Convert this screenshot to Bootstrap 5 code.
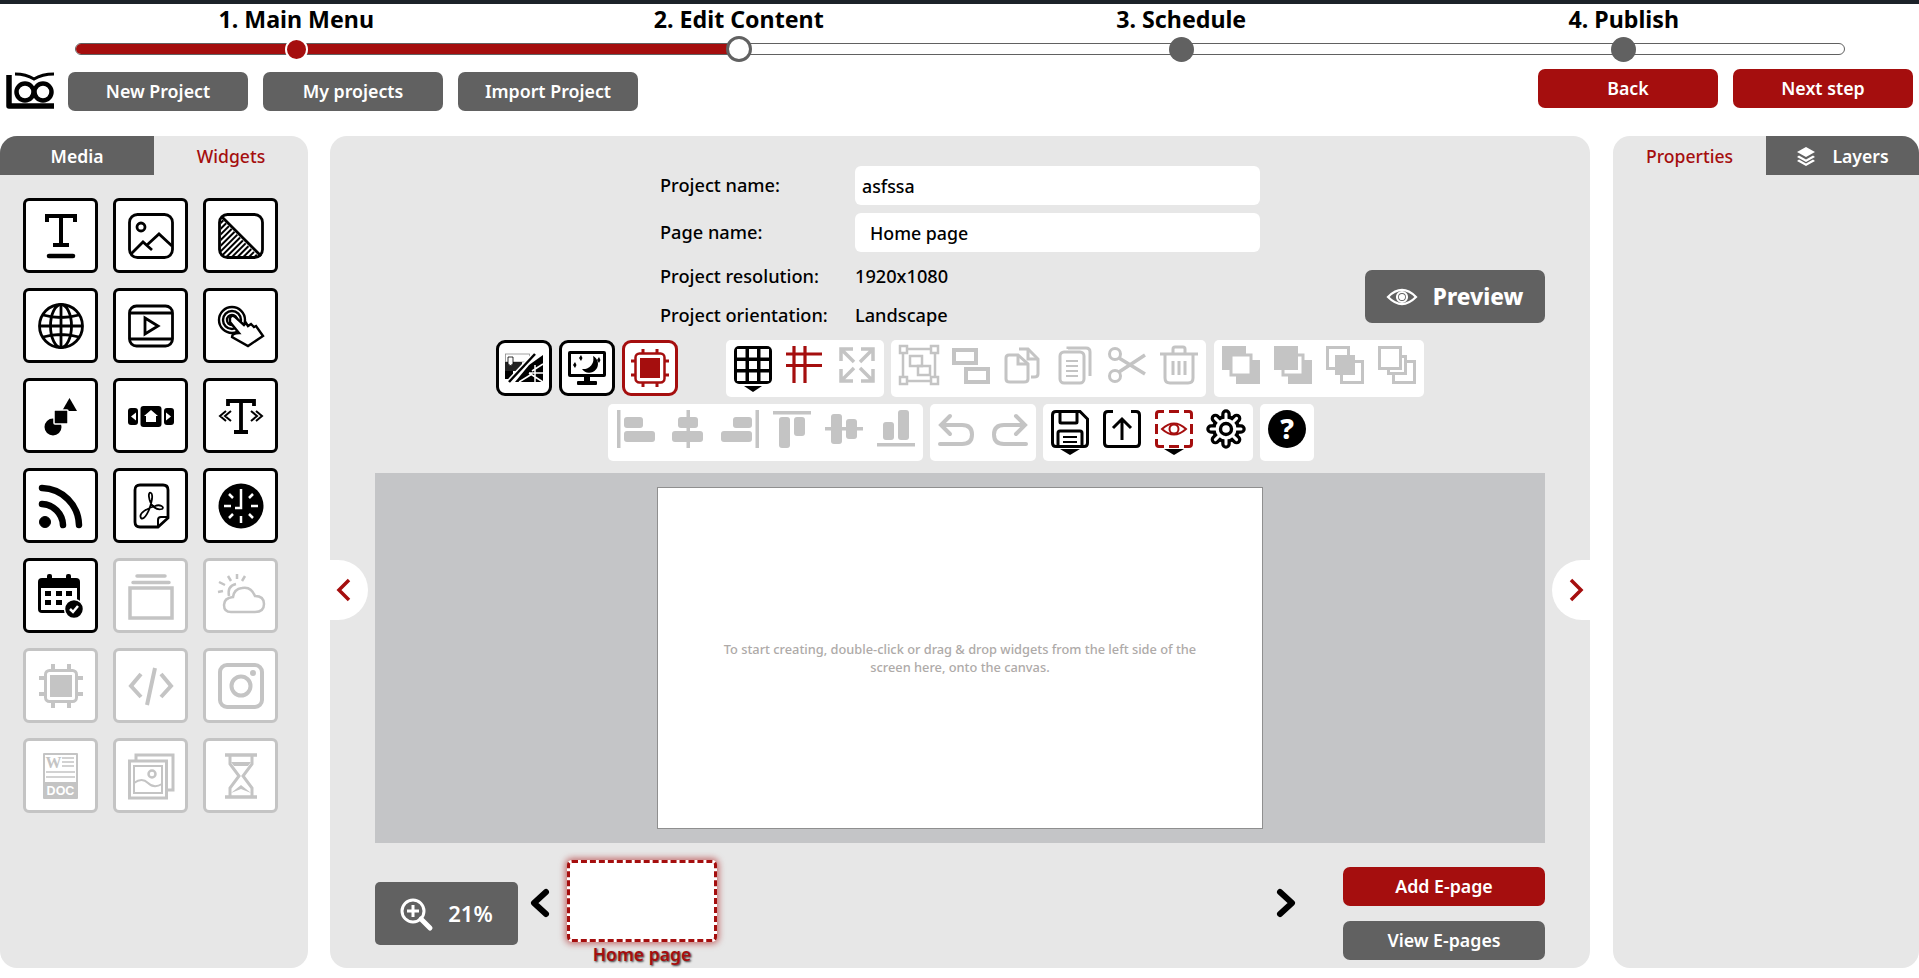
<!DOCTYPE html>
<html lang="en">
<head>
  <meta charset="UTF-8">
  <title>Edit Content</title>
  <link rel="stylesheet" href="https://cdn.jsdelivr.net/npm/bootstrap@5.3.0/dist/css/bootstrap.min.css">
  <style>
    html, body { height: 100%; }
    body { font-family: "Noto Sans", "Open Sans", "Liberation Sans", sans-serif; color: #000; background: #fff; border-top: 4px solid #1c2229; overflow: hidden; }
    svg { display: block; overflow: visible; }

    .step-wrap { margin: 0 74px 0 75px; }
    .step-labels { display: grid; grid-template-columns: repeat(4, 1fr); height: 39px; text-align: center; font-size: 23.2px; font-weight: 700; line-height: 31px; }
    .step-track { position: relative; height: 12px; }
    .step-track .progress { height: 12px; background: #fff; border: 1px solid #616161; border-radius: 6px; }
    .step-track .progress-bar { background: #a50e0e; }
    .step-dots { position: absolute; inset: 0; display: grid; grid-template-columns: repeat(4, 1fr); grid-template-rows: 100%; align-items: center; justify-items: center; }
    .step-dot { width: 25px; height: 25px; border-radius: 50%; background: #616161; }
    .step-done { width: 23px; height: 23px; background: #a50e0e; border: 2px solid #fff; }
    .step-now { width: 26px; height: 26px; background: #fff; border: 3px solid #616161; }

    .top-row { margin-top: 14px; height: 67px; padding: 0 6px; }
    .left-btns { margin-top: 3px; gap: 15px; }
    .right-btns { gap: 15px; }
    .brand-logo { margin-right: -1px; }
    .btn-app { width: 180px; height: 39px; padding: 0; border: 0; border-radius: 7px; font-size: 17.8px; font-weight: 600; line-height: 39px; color: #fff; }
    .btn-app:hover { color: #fff; }
    .btn-grey, .btn-grey:hover { background: #616161; }
    .btn-red, .btn-red:hover { background: #a50e0e; }

    .work-row { height: 832px; }
    .side-left { width: 308px; }
    .side-right { width: 306px; }
    .side-pane { background: #e7e7e7; border-radius: 17px; overflow: hidden; }
    .pane-tab { flex: 1 1 50%; height: 39px; font-size: 17.6px; font-weight: 500; line-height: 40px; text-align: center; }
    .tab-on { color: #a50e0e; }
    .tab-off { background: #616161; color: #fff; font-weight: 600; }

    .widget-grid { display: grid; grid-template-columns: repeat(3, 75px); gap: 15px; padding: 23px 0 0 23px; }
    .wg-tile { width: 75px; height: 75px; background: #fff; border: 3.5px solid #000; border-radius: 6px; display: flex; align-items: center; justify-content: center; color: #000; }
    .wg-off { border-color: #c4c4c4; color: #c4c4c4; }

    .mid-pane { position: relative; width: 1260px; margin: 0 23px 0 22px; padding: 30px 45px 0; background: #e7e7e7; border-radius: 17px; }
    .info-form { margin-left: 285px; width: 600px; font-size: 18.2px; font-weight: 500; }
    .info-row { height: 39px; display: flex; align-items: center; }
    .info-label { width: 195px; flex: none; }
    .info-input { height: 39px; border: 0; border-radius: 6px; padding: 0 7px; font-size: 17.8px; font-weight: 500; color: #000; }
    .info-page { padding-left: 15px; }
    .gap-a { margin-top: 8px; }
    .gap-b { margin-top: 5px; }
    .btn-preview { width: 180px; height: 53px; margin-bottom: 12px; border: 0; border-radius: 7px; font-size: 22.5px; font-weight: 800; color: #fff; background: #616161; }
    .btn-preview:hover { color: #fff; background: #616161; }

    .tool-row { height: 57px; display: flex; gap: 7px; }
    .row-one { margin-top: 5px; padding-left: 121px; }
    .row-two { margin-top: 7px; padding-left: 233px; }
    .mode-tile { width: 56px; height: 56px; background: #fff; border: 3px solid #000; border-radius: 9px; display: flex; align-items: center; justify-content: center; }
    .mode-red { border-color: #a50e0e; color: #a50e0e; }
    .tool-group { display: flex; gap: 14px; height: 57px; padding: 6px 8px; background: #fff; border-radius: 5px; color: #c4c4c4; }
    .wide-group { padding: 6px 8.5px; }
    .first-group { margin-left: 41px; }
    .last-group { margin-left: 1px; }
    .ic-black { color: #000; }
    .ic-red { color: #a50e0e; }

    .stage { height: 370px; margin-top: 12px; background: #c4c5c7; display: flex; align-items: center; justify-content: center; }
    .stage-page { width: 606px; height: 342px; background: #fff; border: 1px solid #8f8f8f; display: flex; align-items: center; justify-content: center; }
    .stage-hint { width: 480px; font-size: 12.8px; font-weight: 500; line-height: 18px; text-align: center; color: #aeaaa8; }

    .bottom-row { padding-top: 17px; }
    .btn-zoom { width: 143px; height: 63px; margin-top: 22px; border-radius: 5px; background: #616161; color: #fff; font-size: 22px; font-weight: 600; }
    .chev-left { margin: 29px 17px 0 12px; }
    .chev-right { margin: 29px 47px 0 auto; }
    .thumb-box { width: 150px; height: 82px; background: #fff; border: 3px dashed #a50e0e; border-radius: 5px; box-shadow: 0 0 6px 2px rgba(165, 14, 14, .55); }
    .thumb-name { margin-top: 1px; text-align: center; font-size: 17.6px; font-weight: 600; line-height: 22px; color: #a50e0e; text-shadow: 1px 1px 2px #333; }
    .page-btns { margin-top: 7px; width: 202px; gap: 15px; }

    .side-arrow { position: absolute; top: 424px; width: 38px; height: 60px; background: #fff; display: flex; align-items: center; justify-content: center; color: #a50e0e; }
    .arrow-l { left: 0; border-radius: 0 30px 30px 0; padding-right: 10px; }
    .arrow-r { right: 0; border-radius: 30px 0 0 30px; padding-left: 10px; }
  </style>
</head>
<body>
<svg width="0" height="0" class="position-absolute">
  <defs>
    <pattern id="hatch" width="4" height="4" patternUnits="userSpaceOnUse" patternTransform="rotate(45)">
      <rect width="2" height="4" fill="#000"></rect>
    </pattern>
  </defs>
</svg>

<div class="step-wrap">
  <div class="step-labels">
    <div>1. Main Menu</div>
    <div>2. Edit Content</div>
    <div>3. Schedule</div>
    <div>4. Publish</div>
  </div>
  <div class="step-track">
    <div class="progress"><div class="progress-bar" style="width: 37.5%"></div></div>
    <div class="step-dots">
      <div class="step-dot step-done"></div>
      <div class="step-dot step-now"></div>
      <div class="step-dot"></div>
      <div class="step-dot"></div>
    </div>
  </div>
</div>

<div class="top-row d-flex justify-content-between align-items-start">
  <div class="left-btns d-flex align-items-start">
    <svg class="brand-logo" width="48" height="37" viewBox="0 0 48 37" fill="none" stroke="#000">
      <path d="M3 3V34H48" stroke-width="5.5" stroke-linejoin="round"></path>
      <circle cx="19" cy="20" r="8.5" stroke-width="4.5"></circle>
      <circle cx="37" cy="20" r="8.5" stroke-width="4.5"></circle>
      <path d="M9 2Q20 2 28 7Q36 2 48 2" stroke-width="3"></path>
    </svg>
    <button class="btn btn-app btn-grey">New Project</button>
    <button class="btn btn-app btn-grey">My projects</button>
    <button class="btn btn-app btn-grey">Import Project</button>
  </div>
  <div class="right-btns d-flex">
    <button class="btn btn-app btn-red">Back</button>
    <button class="btn btn-app btn-red">Next step</button>
  </div>
</div>

<div class="work-row d-flex">
  <div class="side-left side-pane">
    <div class="d-flex">
      <div class="pane-tab tab-off">Media</div>
      <div class="pane-tab tab-on">Widgets</div>
    </div>
    <div class="widget-grid">
      <div class="wg-tile"><svg width="46" height="46" viewBox="0 0 46 46" fill="none" stroke="currentColor"><path d="M9 9V3H37V9M23 3V32M15 32H31" stroke-width="4"></path><path d="M11 43H35" stroke-width="4.500" stroke-linecap="round"></path></svg></div>
      <div class="wg-tile"><svg width="46" height="46" viewBox="0 0 46 46" fill="none" stroke="currentColor" stroke-width="2.800"><rect x="1.500" y="1.500" width="43" height="43" rx="8"></rect><circle cx="13" cy="14" r="4"></circle><path d="M3 41L15 29L24 37M19 32L31 21L44 33"></path></svg></div>
      <div class="wg-tile"><svg width="46" height="46" viewBox="0 0 46 46" fill="none" stroke="currentColor" stroke-width="2.800"><path d="M3 5L41 44H9Q3 44 3 38Z" fill="url(#hatch)" stroke="none"></path><rect x="1.500" y="1.500" width="43" height="43" rx="8"></rect><path d="M4 4L43 43"></path></svg></div>

      <div class="wg-tile"><svg width="46" height="46" viewBox="0 0 46 46" fill="none" stroke="currentColor" stroke-width="2.800"><circle cx="23" cy="23" r="21.500"></circle><ellipse cx="23" cy="23" rx="10.500" ry="21.500"></ellipse><path d="M23 2V44M2 23H44M5 12Q23 17 41 12M5 34Q23 29 41 34"></path></svg></div>
      <div class="wg-tile"><svg width="46" height="46" viewBox="0 0 46 46" fill="none" stroke="currentColor" stroke-width="2.800"><rect x="1.500" y="3" width="43" height="40" rx="7"></rect><path d="M2 10H44M2 36H44"></path><path d="M17 15L30 23L17 31Z"></path></svg></div>
      <div class="wg-tile"><svg width="46" height="46" viewBox="0 0 46 46" fill="none" stroke="currentColor" stroke-width="2.400"><circle cx="14" cy="17" r="5"></circle><circle cx="14" cy="17" r="9"></circle><circle cx="14" cy="17" r="13"></circle><path d="M12 15Q14 11 17 14L26 22L28 20L30 23L33 21L36 24L38 23L45 33L30 43L14 34Q14 30 21 30L12 19Z" fill="#fff"></path></svg></div>

      <div class="wg-tile"><svg width="46" height="46" viewBox="0 0 46 46"><path d="M31.500 5L39 18H24Z" fill="currentColor"></path><circle cx="15" cy="34" r="8.500" fill="currentColor"></circle><rect x="16" y="17" width="14" height="14" rx="1" fill="currentColor" stroke="#fff" stroke-width="1.500"></rect></svg></div>
      <div class="wg-tile"><svg width="46" height="46" viewBox="0 0 46 46"><rect x="12.500" y="13" width="21" height="21" rx="3" fill="currentColor"></rect><path d="M23 17L16 23H18V29H28V23H30Z" fill="#fff"></path><rect x="0" y="15" width="10" height="17" rx="3" fill="currentColor"></rect><rect x="36" y="15" width="10" height="17" rx="3" fill="currentColor"></rect><path d="M3 23.500L8 19.500V27.500ZM43 23.500L38 19.500V27.500Z" fill="#fff"></path></svg></div>
      <div class="wg-tile"><svg width="46" height="46" viewBox="0 0 46 46" fill="none" stroke="currentColor"><path d="M10 13V8H36V13M23 8V38M16 39H30" stroke-width="3.800"></path><path d="M8 18L2 23L8 28M13 18L7 23L13 28M33 18L39 23L33 28M38 18L44 23L38 28" stroke-width="2"></path></svg></div>

      <div class="wg-tile"><svg width="46" height="46" viewBox="0 0 46 46" fill="none" stroke="currentColor"><circle cx="7" cy="39" r="5.500" fill="currentColor"></circle><path d="M4 5A38 38 0 0 1 41 42M4 21A22 22 0 0 1 25 42" stroke-width="6.500" stroke-linecap="round"></path></svg></div>
      <div class="wg-tile"><svg width="46" height="46" viewBox="0 0 46 46" fill="none" stroke="currentColor" stroke-width="2.800"><path d="M12 2H35Q40 2 40 7V35L30 44H12Q7 44 7 39V7Q7 2 12 2Z"></path><path d="M40 34H33Q30 34 30 37V44" stroke-width="2"></path><path d="M13 35C16 38 22 28 24 16C25 8 20 8 21 14C22 22 28 28 34 26C37 24 32 21 27 23C20 25 10 30 13 35Z" stroke-width="1.800"></path></svg></div>
      <div class="wg-tile"><svg width="46" height="46" viewBox="0 0 46 46"><circle cx="23" cy="23" r="22.500" fill="currentColor"></circle><path d="M23 33V40M6 23H13M33 23H40M11 11L15 15M35 11L31 15M11 35L15 31M35 35L31 31" stroke="#fff" stroke-width="2.500"></path><path d="M23 6V25H17" fill="none" stroke="#fff" stroke-width="2.500"></path></svg></div>

      <div class="wg-tile"><svg width="46" height="46" viewBox="0 0 46 46"><path d="M4 5H38Q42 5 42 9V34Q42 40 38 40H4Q0 40 0 36V9Q0 5 4 5Z" fill="currentColor"></path><rect x="3" y="15" width="36" height="22" fill="#fff"></rect><rect x="9" y="1" width="5" height="9" rx="2" fill="currentColor"></rect><rect x="28" y="1" width="5" height="9" rx="2" fill="currentColor"></rect><path d="M7 18H13V23H7ZM18 18H24V23H18ZM28 18H34V23H28ZM7 27H13V32H7ZM18 27H24V32H18Z" fill="currentColor"></path><circle cx="36" cy="36" r="9.500" fill="currentColor" stroke="#fff" stroke-width="1.500"></circle><path d="M32 36L35 39L40 33" fill="none" stroke="#fff" stroke-width="2.500"></path></svg></div>
      <div class="wg-tile wg-off"><svg width="46" height="46" viewBox="0 0 46 46" fill="none" stroke="currentColor"><path d="M9 3H37M5 9.500H41" stroke-width="3.500" stroke-linecap="round"></path><rect x="2" y="15" width="42" height="30" stroke-width="3.500"></rect></svg></div>
      <div class="wg-tile wg-off"><svg width="46" height="46" viewBox="0 0 46 46" fill="none" stroke="currentColor" stroke-width="2.500"><path d="M13 39H37Q46 39 46 31Q46 23 37 23Q33 13 24 15Q16 16 15 24Q6 25 6 32Q6 39 13 39Z" fill="#fff"></path><path d="M11 23Q9 13 18 11M10 3L13 8M19 1V6M27 3L24 8M1 9L7 12M0 19L5 18"></path></svg></div>

      <div class="wg-tile wg-off"><svg width="46" height="46" viewBox="0 0 46 46" fill="none" stroke="currentColor"><rect x="7.500" y="7.500" width="31" height="31" rx="4" stroke-width="3"></rect><rect x="12" y="12" width="22" height="22" fill="currentColor" stroke="none"></rect><path d="M15 1V6M31 1V6M15 40V45M31 40V45M1 15H6M1 31H6M40 15H45M40 31H45" stroke-width="4"></path></svg></div>
      <div class="wg-tile wg-off"><svg width="46" height="46" viewBox="0 0 46 46" fill="none" stroke="currentColor" stroke-width="4"><path d="M13 11L3 23L13 34M33 11L43 23L33 34M27 5L19 42"></path></svg></div>
      <div class="wg-tile wg-off"><svg width="46" height="46" viewBox="0 0 46 46" fill="none" stroke="currentColor" stroke-width="4"><rect x="2" y="2" width="42" height="42" rx="7"></rect><circle cx="23" cy="23" r="9.500"></circle><circle cx="35" cy="10" r="3" fill="currentColor" stroke="none"></circle></svg></div>

      <div class="wg-tile wg-off"><svg width="46" height="46" viewBox="0 0 46 46"><rect x="5" y="0" width="35" height="46" rx="1" fill="currentColor"></rect><rect x="7" y="2" width="31" height="27" fill="#fff"></rect><text x="7.500" y="15" font-family="Liberation Serif, serif" font-size="16" font-weight="700" fill="currentColor">W</text><path d="M24 5H36M24 9H36M24 13H36M8 19H37M8 24H37" stroke="currentColor" stroke-width="1.500"></path><text x="22.500" y="42" text-anchor="middle" font-family="Liberation Sans, sans-serif" font-size="12.500" font-weight="700" fill="#fff">DOC</text></svg></div>
      <div class="wg-tile wg-off"><svg width="46" height="46" viewBox="0 0 46 46" fill="none" stroke="currentColor" stroke-width="3"><path d="M8 8V2H45V37H39"></path><rect x="1.500" y="8" width="37" height="37"></rect><rect x="6" y="13" width="28" height="27" stroke-width="2"></rect><circle cx="24" cy="21" r="3.500" stroke-width="2.500"></circle><path d="M6 30Q14 24 20 30T34 31" stroke-width="2"></path></svg></div>
      <div class="wg-tile wg-off"><svg width="46" height="46" viewBox="0 0 46 46" fill="none" stroke="currentColor"><path d="M7 2H39M7 44H39" stroke-width="3.500"></path><path d="M12 3V11L21 23L12 35V43M34 3V11L25 23L34 35V43" stroke-width="3"></path><path d="M13 9H33L30 13H16ZM13 40L23 32L33 40L23 36Z" fill="currentColor" stroke="none"></path></svg></div>
    </div>
  </div>

  <div class="mid-pane">
    <div class="d-flex justify-content-between align-items-end">
      <form class="info-form">
        <div class="info-row"><label class="info-label">Project name:</label><input class="form-control info-input" value="asfssa"></div>
        <div class="info-row gap-a"><label class="info-label">Page name:</label><input class="form-control info-input info-page" value="Home page"></div>
        <div class="info-row gap-b"><span class="info-label">Project resolution:</span><span>1920x1080</span></div>
        <div class="info-row"><span class="info-label">Project orientation:</span><span>Landscape</span></div>
      </form>
      <button class="btn btn-preview d-flex align-items-center justify-content-center gap-3">
        <svg width="30" height="20" viewBox="0 0 30 20" fill="none" stroke="#fff" stroke-width="2.200"><path d="M1 10Q15 -4 29 10Q15 24 1 10Z"></path><circle cx="15" cy="10" r="5"></circle><circle cx="15" cy="10" r="2" fill="#fff"></circle></svg>
        Preview
      </button>
    </div>

    <div class="tool-row row-one">
      <div class="mode-tile"><svg width="38" height="30" viewBox="0 0 38 30"><rect x="0.500" y="1" width="24" height="8" fill="#fff" stroke="#8a8a8a" stroke-width=".8"></rect><rect x="0" y="9" width="17" height="9" fill="#222"></rect><rect x="0" y="18" width="8" height="8" fill="#000"></rect><path d="M3 4H8V11Q5.500 14 3 11Z" fill="#fff" stroke="#000" stroke-width=".8"></path><path d="M10 29H38V2L24 12Z" fill="#000"></path><path d="M14 29L27 21M38 29L24 20M38 20H24M30 12V29M38 11L27 18" stroke="#fff" stroke-width="1.500"></path><path d="M4 29L30 1" stroke="#fff" stroke-width="5.500"></path><path d="M4 29L30 1" stroke="#000" stroke-width="2.500"></path></svg></div>
      <div class="mode-tile"><svg width="38" height="34" viewBox="0 0 38 34"><rect x="0" y="0" width="38" height="26" rx="2" fill="#000"></rect><rect x="3" y="3" width="32" height="20" fill="#fff"></rect><path d="M25 5A8.800 8.800 0 1 1 14 18A10 10 0 0 0 25 5Z" fill="#000"></path><path d="M13 4L14.500 7L13 10L11 7ZM7 11L8.500 14L7 17L5 14ZM31 6L32.500 9L31 12L29 9Z" fill="#000"></path><rect x="16" y="26" width="6" height="5" fill="#000"></rect><rect x="9" y="30" width="20" height="4" rx="1" fill="#000"></rect></svg></div>
      <div class="mode-tile mode-red"><svg width="38" height="38" viewBox="0 0 38 38" fill="none" stroke="currentColor"><rect x="4.500" y="4.500" width="29" height="29" rx="4" stroke-width="2.500"></rect><rect x="9" y="9" width="20" height="20" fill="currentColor" stroke="none"></rect><path d="M12 0V4M26 0V4M12 34V38M26 34V38M0 12H4M0 26H4M34 12H38M34 26H38" stroke-width="3"></path></svg></div>

      <div class="tool-group first-group">
        <svg class="ic-black" width="38" height="38" viewBox="0 0 38 38"><rect x="0" y="0" width="38" height="38" rx="5" fill="currentColor"></rect><path d="M3 3H11.500V11.500H3ZM15 3H23V11.500H15ZM26.500 3H35V11.500H26.500ZM3 15H11.500V23H3ZM15 15H23V23H15ZM26.500 15H35V23H26.500ZM3 26.500H11.500V35H3ZM15 26.500H23V35H15ZM26.500 26.500H35V35H26.500Z" fill="#fff"></path><path d="M10 40H28L19 46Z" fill="currentColor"></path></svg>
        <svg class="ic-red" width="38" height="38" viewBox="0 0 38 38" fill="none" stroke="currentColor" stroke-width="3.200"><path d="M0 8H36M0 19.500H36M8 0V37M19 0V37"></path></svg>
        <svg width="38" height="38" viewBox="0 0 38 38" fill="none" stroke="currentColor" stroke-width="3.500"><path d="M3 15V3H15M35 15V3H23M3 23V35H15M35 23V35H23M3 3L16 16M35 3L22 16M3 35L16 22M35 35L22 22"></path></svg>
      </div>
      <div class="tool-group wide-group">
        <svg width="38" height="38" viewBox="0 0 38 38" fill="none" stroke="currentColor" stroke-width="2.500"><rect x="3" y="3" width="32" height="32"></rect><rect x="10" y="10" width="12" height="10"></rect><rect x="18" y="20" width="12" height="9"></rect><path d="M0 0H7V7H0ZM31 0H38V7H31ZM0 31H7V38H0ZM31 31H38V38H31Z" fill="#fff"></path></svg>
        <svg width="38" height="38" viewBox="0 0 38 38" fill="none" stroke="currentColor" stroke-width="4"><rect x="2" y="4" width="22" height="13"></rect><rect x="14" y="23" width="22" height="13"></rect></svg>
        <svg width="38" height="38" viewBox="0 0 38 38" fill="none" stroke="currentColor" stroke-width="3"><path d="M15 3H24L34 13V28Q34 31 30 31H27"></path><path d="M24 3V13H34"></path><path d="M5 9H14L24 18V33Q24 36 20 36H6Q2 36 2 33V12Q2 9 5 9Z"></path><path d="M14 9V18H24"></path></svg>
        <svg width="38" height="38" viewBox="0 0 38 38" fill="none" stroke="currentColor" stroke-width="3"><path d="M12 3V2H30Q34 2 34 6V30"></path><rect x="4" y="6" width="24" height="31" rx="4"></rect><path d="M10 15H22M10 20H22M10 25H22M10 30H22" stroke-width="2.200"></path></svg>
        <svg width="38" height="38" viewBox="0 0 38 38" fill="none" stroke="currentColor" stroke-width="3"><circle cx="7" cy="8" r="5.500"></circle><circle cx="7" cy="30" r="5.500"></circle><path d="M11 12L37 28M11 26L37 9" stroke-width="3.500"></path></svg>
        <svg width="38" height="38" viewBox="0 0 38 38" fill="none" stroke="currentColor" stroke-width="3"><path d="M0 8H38M13 8V3Q13 1 15 1H23Q25 1 25 3V8"></path><path d="M5 8V32Q5 37 10 37H28Q33 37 33 32V8"></path><path d="M13 15V29M19 15V29M25 15V29"></path></svg>
      </div>
      <div class="tool-group last-group">
        <svg width="38" height="38" viewBox="0 0 38 38"><rect x="0" y="0" width="24" height="24" fill="currentColor"></rect><rect x="14" y="14" width="24" height="24" fill="currentColor"></rect><rect x="9" y="9" width="20" height="20" fill="#fff" stroke="currentColor" stroke-width="3"></rect></svg>
        <svg width="38" height="38" viewBox="0 0 38 38"><rect x="14" y="14" width="24" height="24" fill="currentColor"></rect><rect x="9" y="9" width="20" height="20" fill="#fff" stroke="currentColor" stroke-width="3"></rect><rect x="0" y="0" width="24" height="24" fill="currentColor"></rect></svg>
        <svg width="38" height="38" viewBox="0 0 38 38"><rect x="1.500" y="1.500" width="21" height="21" fill="#fff" stroke="currentColor" stroke-width="3"></rect><rect x="15.500" y="15.500" width="21" height="21" fill="#fff" stroke="currentColor" stroke-width="3"></rect><rect x="9" y="9" width="20" height="20" fill="currentColor"></rect></svg>
        <svg width="38" height="38" viewBox="0 0 38 38"><rect x="15.500" y="15.500" width="21" height="21" fill="#fff" stroke="currentColor" stroke-width="3"></rect><rect x="10.500" y="10.500" width="17" height="17" fill="#fff" stroke="currentColor" stroke-width="3"></rect><rect x="1.500" y="1.500" width="21" height="21" fill="#fff" stroke="currentColor" stroke-width="3"></rect></svg>
      </div>
    </div>

    <div class="tool-row row-two">
      <div class="tool-group wide-group">
        <svg width="38" height="38" viewBox="0 0 38 38"><rect x="0" y="0" width="3.500" height="38" fill="currentColor"></rect><rect x="7" y="7" width="19" height="11" rx="3" fill="currentColor"></rect><rect x="7" y="21" width="31" height="11" rx="3" fill="currentColor"></rect></svg>
        <svg width="38" height="38" viewBox="0 0 38 38"><rect x="17.500" y="0" width="3.500" height="38" fill="currentColor"></rect><rect x="9" y="7" width="20" height="11" rx="3" fill="currentColor"></rect><rect x="3" y="21" width="31" height="11" rx="3" fill="currentColor"></rect></svg>
        <svg width="38" height="38" viewBox="0 0 38 38"><rect x="34.500" y="0" width="3.500" height="38" fill="currentColor"></rect><rect x="12" y="7" width="19" height="11" rx="3" fill="currentColor"></rect><rect x="0" y="21" width="31" height="11" rx="3" fill="currentColor"></rect></svg>
        <svg width="38" height="38" viewBox="0 0 38 38"><rect x="0" y="1" width="38" height="3.500" fill="currentColor"></rect><rect x="6" y="7" width="11" height="31" rx="3" fill="currentColor"></rect><rect x="21" y="7" width="11" height="19" rx="3" fill="currentColor"></rect></svg>
        <svg width="38" height="38" viewBox="0 0 38 38"><rect x="0" y="17" width="38" height="3.500" fill="currentColor"></rect><rect x="6" y="4" width="11" height="30" rx="3" fill="currentColor"></rect><rect x="21" y="9" width="11" height="20" rx="3" fill="currentColor"></rect></svg>
        <svg width="38" height="38" viewBox="0 0 38 38"><rect x="0" y="33" width="38" height="3.500" fill="currentColor"></rect><rect x="6" y="12" width="11" height="18" rx="3" fill="currentColor"></rect><rect x="21" y="0" width="11" height="30" rx="3" fill="currentColor"></rect></svg>
      </div>
      <div class="tool-group">
        <svg width="38" height="38" viewBox="0 0 38 38" fill="none" stroke="currentColor" stroke-width="4" stroke-linecap="round"><path d="M12 6L3 15L12 24M4 15H24Q34 15 34 24.500Q34 34 24 34H2"></path></svg>
        <svg width="38" height="38" viewBox="0 0 38 38" fill="none" stroke="currentColor" stroke-width="4" stroke-linecap="round"><path d="M26 6L35 15L26 24M34 15H14Q4 15 4 24.500Q4 34 14 34H36"></path></svg>
      </div>
      <div class="tool-group">
        <svg class="ic-black" width="38" height="38" viewBox="0 0 38 38" fill="none" stroke="currentColor" stroke-width="3"><path d="M5 1.500H29L36.500 9V33Q36.500 36.500 33 36.500H5Q1.500 36.500 1.500 33V5Q1.500 1.500 5 1.500Z"></path><path d="M9 2V12Q9 13 10 13H25Q26 13 26 12V2"></path><path d="M7 36V23Q7 21 9 21H29Q31 21 31 23V36"></path><path d="M12 27H26M12 32H26" stroke-width="2.200"></path><path d="M9 39H29L19 45Z" fill="currentColor" stroke="none"></path></svg>
        <svg class="ic-black" width="38" height="38" viewBox="0 0 38 38" fill="none" stroke="currentColor" stroke-width="3"><path d="M10 1.500H5Q1.500 1.500 1.500 5V33Q1.500 36.500 5 36.500H33Q36.500 36.500 36.500 33V5Q36.500 1.500 33 1.500H28"></path><path d="M19 30V9M10 18L19 9L28 18"></path></svg>
        <svg class="ic-red" width="38" height="38" viewBox="0 0 38 38" fill="none" stroke="currentColor"><path d="M1.500 9V4Q1.500 1.500 4 1.500H9M14 1.500H24M29 1.500H34Q36.500 1.500 36.500 4V9M36.500 14V24M36.500 29V34Q36.500 36.500 34 36.500H29M24 36.500H14M9 36.500H4Q1.500 36.500 1.500 34V29M1.500 24V14" stroke-width="3"></path><path d="M7 19Q19 8 31 19Q19 30 7 19Z" stroke-width="2"></path><circle cx="19" cy="19" r="4.500" stroke-width="2"></circle><path d="M9 39H29L19 45Z" fill="#000" stroke="none"></path></svg>
        <svg class="ic-black" width="38" height="38" viewBox="0 0 38 38" fill="none" stroke="currentColor"><circle cx="19" cy="19" r="14" fill="currentColor" stroke="none"></circle><path d="M19 4V9M19 29V34M4 19H9M29 19H34M8.400 8.400L12 12M26 26L29.600 29.600M8.400 29.600L12 26M26 12L29.600 8.400" stroke-width="9.500" stroke-linecap="round"></path><path d="M19 4V10M19 28V34M4 19H10M28 19H34M8.400 8.400L12.500 12.500M25.500 25.500L29.600 29.600M8.400 29.600L12.500 25.500M25.500 12.500L29.600 8.400" stroke="#fff" stroke-width="3" stroke-linecap="round"></path><circle cx="19" cy="19" r="10.500" fill="#fff" stroke="none"></circle><circle cx="19" cy="19" r="5.500" stroke-width="3.400"></circle></svg>
      </div>
      <div class="tool-group">
        <svg class="ic-black" width="38" height="38" viewBox="0 0 38 38"><circle cx="19" cy="19" r="19" fill="currentColor"></circle><text x="19" y="29" text-anchor="middle" font-family="Noto Sans, sans-serif" font-size="28" font-weight="800" fill="#fff">?</text></svg>
      </div>
    </div>

    <div class="stage">
      <div class="stage-page">
        <div class="stage-hint">To start creating, double-click or drag &amp; drop widgets from the left side of the screen here, onto the canvas.</div>
      </div>
    </div>

    <div class="bottom-row d-flex align-items-start">
      <div class="btn-zoom d-flex align-items-center justify-content-center gap-3">
        <svg width="32" height="32" viewBox="0 0 32 32" fill="none" stroke="#fff" stroke-width="3"><circle cx="13" cy="13" r="11"></circle><path d="M7 13H19M13 7V19"></path><path d="M21 21L30 30" stroke-width="5" stroke-linecap="round"></path></svg>
        <span>21%</span>
      </div>
      <svg class="chev-left" width="20" height="28" viewBox="0 0 20 28" fill="none" stroke="#000" stroke-width="6" stroke-linecap="round" stroke-linejoin="round"><path d="M16 3L4 14L16 25"></path></svg>
      <div>
        <div class="thumb-box"></div>
        <div class="thumb-name">Home page</div>
      </div>
      <svg class="chev-right" width="20" height="28" viewBox="0 0 20 28" fill="none" stroke="#000" stroke-width="6" stroke-linecap="round" stroke-linejoin="round"><path d="M4 3L16 14L4 25"></path></svg>
      <div class="page-btns d-flex flex-column">
        <button class="btn btn-app btn-red w-100">Add E-page</button>
        <button class="btn btn-app btn-grey w-100">View E-pages</button>
      </div>
    </div>

    <div class="side-arrow arrow-l"><svg width="14" height="24" viewBox="0 0 14 24" fill="none" stroke="currentColor" stroke-width="3.500"><path d="M12 2L2 12L12 22"></path></svg></div>
    <div class="side-arrow arrow-r"><svg width="14" height="24" viewBox="0 0 14 24" fill="none" stroke="currentColor" stroke-width="3.500"><path d="M2 2L12 12L2 22"></path></svg></div>
  </div>

  <div class="side-right side-pane">
    <div class="d-flex">
      <div class="pane-tab tab-on">Properties</div>
      <div class="pane-tab tab-off d-flex align-items-center justify-content-center gap-3">
        <svg width="20" height="20" viewBox="0 0 20 20" fill="#fff"><path d="M10 1L19 6L10 11L1 6Z"></path><path d="M3 9.500L1 11L10 16L19 11L17 9.500L10 13.500Z"></path><path d="M3 13.500L1 15L10 20L19 15L17 13.500L10 17.500Z"></path></svg>
        Layers
      </div>
    </div>
  </div>
</div>

<script src="https://cdn.jsdelivr.net/npm/bootstrap@5.3.0/dist/js/bootstrap.bundle.min.js"></script>
</body>
</html>
